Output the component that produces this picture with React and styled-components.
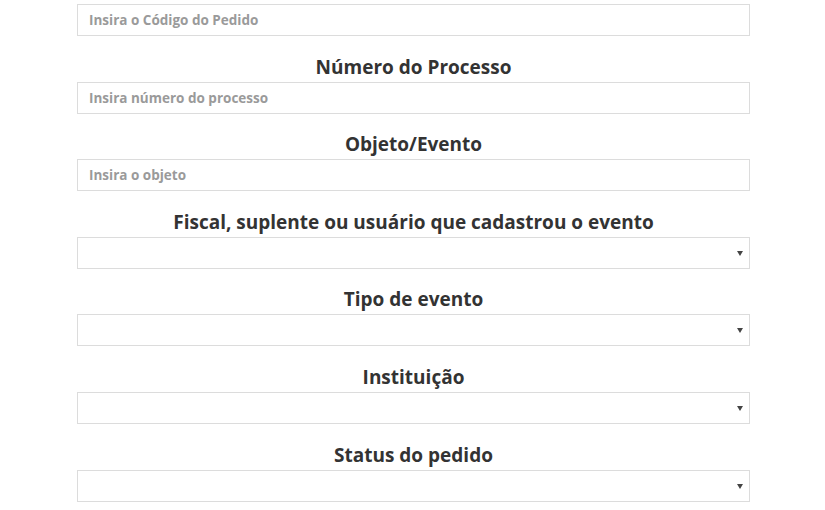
import React from 'react'
import styled, { createGlobalStyle } from 'styled-components'

const fields = [
  { placeholder: 'Insira o Código do Pedido' },
  { label: 'Número do Processo', placeholder: 'Insira número do processo' },
  { label: 'Objeto/Evento', placeholder: 'Insira o objeto' },
  { label: 'Fiscal, suplente ou usuário que cadastrou o evento', select: true },
  { label: 'Tipo de evento', select: true },
  { label: 'Instituição', select: true },
  { label: 'Status do pedido', select: true },
]

const App = () => {
  return (
    <>
      <GlobalStyle />
      <Form>
        {fields.map((field, index) => (
          <Group key={index}>
            {field.label && <Label>{field.label}</Label>}
            {field.select ? (
              <SelectWrap>
                <Select defaultValue="">
                  <option value=""></option>
                </Select>
              </SelectWrap>
            ) : (
              <Input placeholder={field.placeholder} />
            )}
          </Group>
        ))}
      </Form>
    </>
  )
}

export default App

const GlobalStyle = createGlobalStyle`
  body {
    margin: 0;
    background: #fff;
    font-family: "Open Sans", "DejaVu Sans", sans-serif;
  }
`

const Form = styled.div`
  padding: 4px 75px 0 77px;
  display: flex;
  flex-direction: column;
  gap: 19.6px;
`

const Group = styled.div`
  display: flex;
  flex-direction: column;
  gap: 4px;
`

const Label = styled.div`
  text-align: center;
  font-size: 19px;
  font-weight: 700;
  line-height: 22px;
  color: #333;
`

const Input = styled.input`
  box-sizing: border-box;
  width: 100%;
  height: 32px;
  padding: 0 11px;
  border: 1px solid #dcdcdc;
  border-radius: 0;
  outline: none;
  font-family: "Open Sans", "DejaVu Sans", sans-serif;
  font-size: 13.5px;
  font-weight: 700;
  color: #555;

  &::placeholder {
    color: #9a9a9a;
  }
`

const SelectWrap = styled.div`
  position: relative;

  &::after {
    content: '';
    position: absolute;
    right: 7px;
    top: 14px;
    border-left: 3px solid transparent;
    border-right: 3px solid transparent;
    border-top: 5px solid #444;
  }
`

const Select = styled.select`
  box-sizing: border-box;
  width: 100%;
  height: 32px;
  border: 1px solid #dcdcdc;
  border-radius: 0;
  background: #fff;
  appearance: none;
  outline: none;
  font-family: "Open Sans", "DejaVu Sans", sans-serif;
  font-size: 12px;
`
